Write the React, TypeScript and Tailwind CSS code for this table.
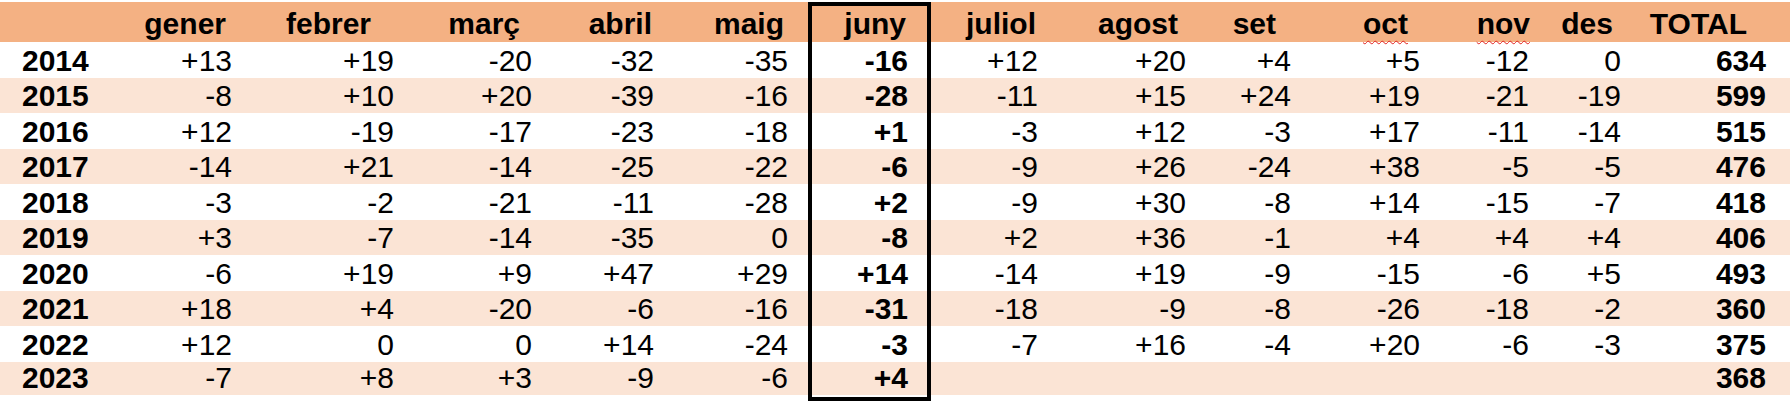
import React from "react";

const COLS =
  "grid grid-cols-[140px_100px_160px_140px_120px_148px_123px_114px_150px_105px_128px_110px_90px_161px]";

const HEADERS = [
  "gener",
  "febrer",
  "març",
  "abril",
  "maig",
  "juny",
  "juliol",
  "agost",
  "set",
  "oct",
  "nov",
  "des",
  "TOTAL",
];

const HEADER_PR = [
  "pr-[14px]",
  "pr-[29px]",
  "pr-[20px]",
  "pr-[8px]",
  "pr-[24px]",
  "pr-[21px]",
  "pr-[9px]",
  "pr-[17px]",
  "pr-[24px]",
  "pr-[20px]",
  "pr-[8px]",
  "pr-[15px]",
  "pr-[42px]",
];

const VALUE_PR = [
  "pr-[8px]",
  "pr-[6px]",
  "pr-[8px]",
  "pr-[6px]",
  "pr-[20px]",
  "pr-[19px]",
  "pr-[7px]",
  "pr-[9px]",
  "pr-[9px]",
  "pr-[8px]",
  "pr-[9px]",
  "pr-[7px]",
  "pr-[23px]",
];

type Row = { year: string; vals: string[]; total: string };

const ROWS: Row[] = [
  { year: "2014", vals: ["+13", "+19", "-20", "-32", "-35", "-16", "+12", "+20", "+4", "+5", "-12", "0"], total: "634" },
  { year: "2015", vals: ["-8", "+10", "+20", "-39", "-16", "-28", "-11", "+15", "+24", "+19", "-21", "-19"], total: "599" },
  { year: "2016", vals: ["+12", "-19", "-17", "-23", "-18", "+1", "-3", "+12", "-3", "+17", "-11", "-14"], total: "515" },
  { year: "2017", vals: ["-14", "+21", "-14", "-25", "-22", "-6", "-9", "+26", "-24", "+38", "-5", "-5"], total: "476" },
  { year: "2018", vals: ["-3", "-2", "-21", "-11", "-28", "+2", "-9", "+30", "-8", "+14", "-15", "-7"], total: "418" },
  { year: "2019", vals: ["+3", "-7", "-14", "-35", "0", "-8", "+2", "+36", "-1", "+4", "+4", "+4"], total: "406" },
  { year: "2020", vals: ["-6", "+19", "+9", "+47", "+29", "+14", "-14", "+19", "-9", "-15", "-6", "+5"], total: "493" },
  { year: "2021", vals: ["+18", "+4", "-20", "-6", "-16", "-31", "-18", "-9", "-8", "-26", "-18", "-2"], total: "360" },
  { year: "2022", vals: ["+12", "0", "0", "+14", "-24", "-3", "-7", "+16", "-4", "+20", "-6", "-3"], total: "375" },
  { year: "2023", vals: ["-7", "+8", "+3", "-9", "-6", "+4", "", "", "", "", "", ""], total: "368" },
];

export default function App() {
  return (
    <div
      className="w-[1790px] h-[404px] bg-white pt-[2px] text-black text-[30px] overflow-hidden"
      style={{ fontFamily: '"Liberation Sans", Arial, sans-serif' }}
    >
      {/* Header */}
      <div className={`${COLS} h-[40px] bg-[#f4b183] font-bold`}>
        <div />
        {HEADERS.map((h, i) => {
          const juny = i === 5;
          const spell = h === "oct" || h === "nov";
          return (
            <div
              key={h}
              className={`flex items-end justify-end leading-[30px] pb-[3px] ${HEADER_PR[i]} ${
                juny ? "border-x-4 border-t-4 border-black" : ""
              }`}
            >
              <span
                className={
                  spell
                    ? "underline decoration-wavy decoration-[#e02020] decoration-[1px] underline-offset-[6px]"
                    : ""
                }
              >
                {h}
              </span>
            </div>
          );
        })}
      </div>

      {/* Body rows */}
      {ROWS.map((r, ri) => {
        const pink = ri % 2 === 1;
        const last = ri === ROWS.length - 1;
        return (
          <div
            key={r.year}
            className={`${COLS} ${last ? "h-[33.5px]" : "h-[35.5px]"} ${
              pink ? "bg-[#fbe4d5]" : "bg-white"
            }`}
          >
            <div className="flex items-end pl-[22px] font-bold leading-[30px] pb-[2px]">
              {r.year}
            </div>
            {r.vals.map((v, i) => {
              const juny = i === 5;
              return (
                <div
                  key={i}
                  className={`flex items-end justify-end leading-[30px] pb-[2px] ${VALUE_PR[i]} ${
                    juny ? "border-x-4 border-black font-bold" : ""
                  }`}
                >
                  {v}
                </div>
              );
            })}
            <div
              className={`flex items-end justify-end leading-[30px] pb-[2px] font-bold ${VALUE_PR[12]}`}
            >
              {r.total}
            </div>
          </div>
        );
      })}

      {/* Box bottom */}
      <div className={`${COLS} h-[6px] bg-white`}>
        <div />
        <div />
        <div />
        <div />
        <div />
        <div />
        <div className="border-x-4 border-b-4 border-black" />
      </div>
    </div>
  );
}
